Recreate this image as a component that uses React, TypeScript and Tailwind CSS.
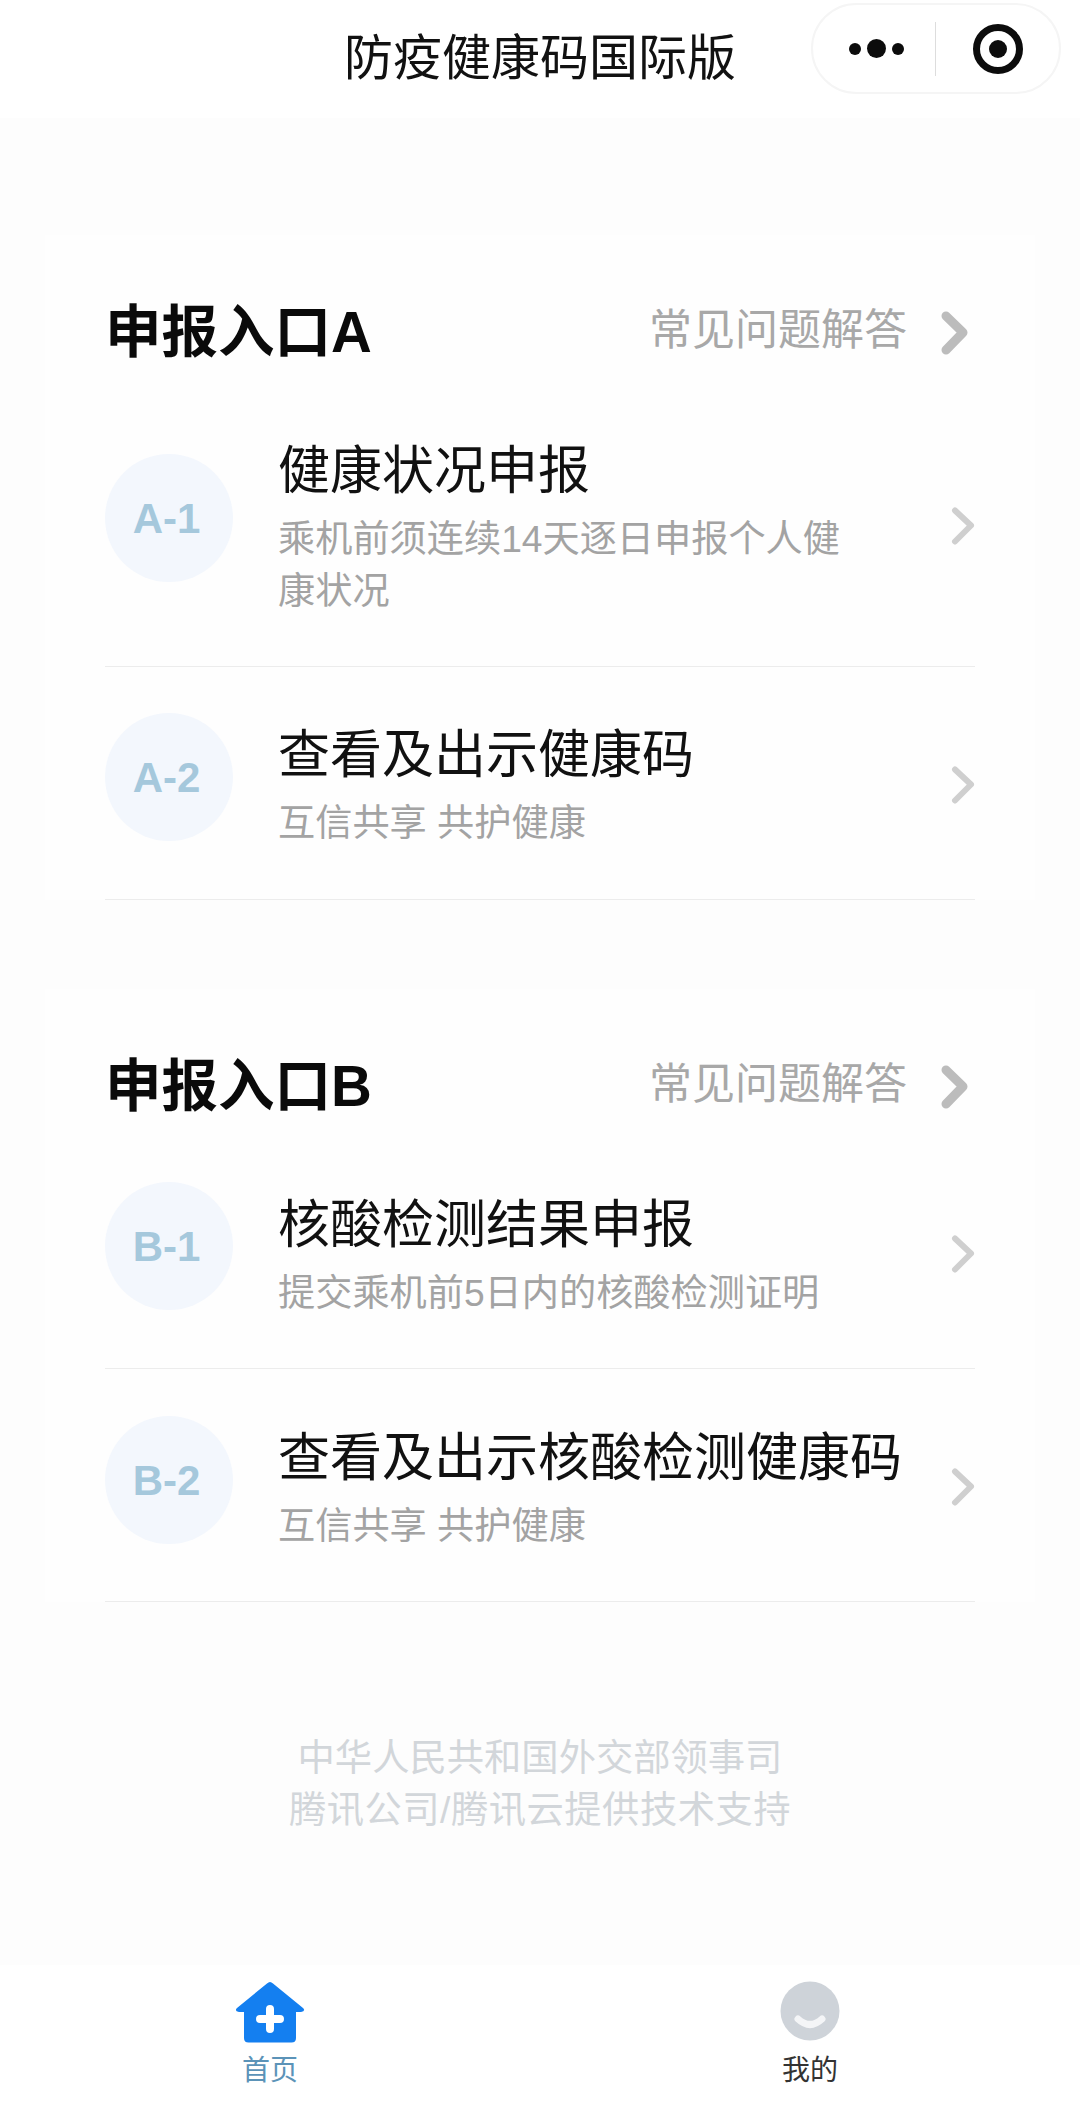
import React from "react";

const FONT = '"Liberation Sans", "Noto Sans CJK SC", sans-serif';

function Chevron({ big }: { big?: boolean }) {
  if (big) {
    return (
      <svg width="28" height="44" viewBox="0 0 28 44" className="shrink-0" fill="none">
        <path d="M5 5 L22 21.5 L5 39" stroke="#bcbcbc" strokeWidth="9" strokeLinecap="round" strokeLinejoin="round" />
      </svg>
    );
  }
  return (
    <svg width="24" height="38" viewBox="0 0 24 38" className="shrink-0" fill="none">
      <path d="M4 3.5 L20 18.5 L4 34.5" stroke="#cfcfcf" strokeWidth="6" strokeLinecap="round" strokeLinejoin="round" />
    </svg>
  );
}

type Item = { badge: string; title: string; sub: string; h: string; circle: string; text: string; chev: string };

function Row({ item }: { item: Item }) {
  return (
    <div className={`flex items-start border-b border-[#ececec] ${item.h}`}>
      <div className={`flex h-[128px] w-[128px] shrink-0 items-center justify-center rounded-full bg-[#f3f7fd] pr-[5px] text-[42px] font-bold text-[#a5c8dc] ${item.circle}`}>
        {item.badge}
      </div>
      <div className={`ml-[45px] w-[640px] shrink-0 ${item.text}`}>
        <div className="text-[52px] leading-[64px] text-[#111111]">{item.title}</div>
        <div className="mt-[10px] w-[590px] text-[37.2px] leading-[52px] text-[#a3a3a3]">{item.sub}</div>
      </div>
      <div className={`ml-auto ${item.chev}`}>
        <Chevron />
      </div>
    </div>
  );
}

function Section({ name, items }: { name: string; items: Item[] }) {
  return (
    <section className="mx-[45px] bg-[#fefefe] px-[60px] pt-[66px]">
      <div className="flex items-center justify-between pr-[6px]">
        <div className="text-[56.5px] font-bold leading-[64px] text-[#0a0a0a]">{name}</div>
        <div className="flex items-center gap-[34px]">
          <span className="mt-[-6px] text-[43px] leading-[60px] text-[#a8a8a8]">常见问题解答</span>
          <Chevron big />
        </div>
      </div>
      {items.map((item) => (
        <Row key={item.badge} item={item} />
      ))}
    </section>
  );
}

const groupA: Item[] = [
  { badge: "A-1", title: "健康状况申报", sub: "乘机前须连续14天逐日申报个人健康状况", h: "h-[302px]", circle: "mt-[89px]", text: "pt-[74px]", chev: "mt-[142px]" },
  { badge: "A-2", title: "查看及出示健康码", sub: "互信共享 共护健康", h: "h-[233px]", circle: "mt-[46px]", text: "pt-[56px]", chev: "mt-[99px]" },
];

const groupB: Item[] = [
  { badge: "B-1", title: "核酸检测结果申报", sub: "提交乘机前5日内的核酸检测证明", h: "h-[250px]", circle: "mt-[63px]", text: "pt-[74px]", chev: "mt-[116px]" },
  { badge: "B-2", title: "查看及出示核酸检测健康码", sub: "互信共享 共护健康", h: "h-[233px]", circle: "mt-[47px]", text: "pt-[57px]", chev: "mt-[99px]" },
];

export default function App() {
  return (
    <div className="relative flex h-[2102px] w-[1080px] flex-col overflow-hidden bg-[#fdfdfd]" style={{ fontFamily: FONT }}>
      <header className="relative flex h-[118px] shrink-0 items-center justify-center bg-white pb-[2px]">
        <h1 className="text-[49px] font-normal leading-[60px] text-[#111111]">防疫健康码国际版</h1>
        <div className="absolute left-[811px] top-[3px] flex h-[91px] w-[250px] items-center rounded-full border-2 border-[#f5f5f5] bg-white pl-[36px]">
          <div className="flex items-center gap-[6px]">
            <span className="h-[12px] w-[12px] rounded-full bg-[#0c0c0c]" />
            <span className="h-[19px] w-[19px] rounded-full bg-[#0c0c0c]" />
            <span className="h-[12px] w-[12px] rounded-full bg-[#0c0c0c]" />
          </div>
          <div className="ml-[31px] h-[54px] w-[1px] bg-[#dddddd]" />
          <div className="ml-[37px] flex h-[50px] w-[50px] items-center justify-center rounded-full border-[7px] border-[#0c0c0c]">
            <span className="h-[18px] w-[18px] rounded-full bg-[#0c0c0c]" />
          </div>
        </div>
      </header>

      <div className="h-[117px] shrink-0" />

      <Section name="申报入口A" items={groupA} />

      <div className="h-[89px] shrink-0" />

      <Section name="申报入口B" items={groupB} />

      <footer className="mt-[130px] text-center text-[37.3px] leading-[52px] text-[#d2d6da]">
        <div>中华人民共和国外交部领事司</div>
        <div className="tracking-[0.5px]">腾讯公司/腾讯云提供技术支持</div>
      </footer>

      <nav className="mt-auto flex h-[137px] shrink-0 bg-white">
        <div className="flex w-[540px] flex-col items-center pt-[16px]">
          <svg width="70" height="62" viewBox="0 0 70 62" fill="none">
            <path d="M35 1 Q36.5 1 38 2.5 L68 27 Q71 30 66 31 L61 31 L61 57 Q61 61.5 56.5 61.5 L13.5 61.5 Q9 61.5 9 57 L9 31 L4 31 Q-1 30 2 27 L32 2.5 Q33.5 1 35 1 Z" fill="#147ff0" />
            <path d="M35 28 V48 M25 38 H45" stroke="#ffffff" strokeWidth="8" strokeLinecap="round" />
          </svg>
          <span className="mt-[10px] text-[28px] leading-[36px] text-[#5b93b8]">首页</span>
        </div>
        <div className="flex w-[540px] flex-col items-center pt-[16px]">
          <svg width="60" height="60" viewBox="0 0 60 60" fill="none">
            <circle cx="30" cy="30" r="29.5" fill="#ced3d9" />
            <path d="M18 38 Q30 49 42 38" stroke="#f4f5f7" strokeWidth="7" strokeLinecap="round" />
          </svg>
          <span className="mt-[12px] text-[28px] leading-[36px] text-[#333333]">我的</span>
        </div>
      </nav>
    </div>
  );
}
